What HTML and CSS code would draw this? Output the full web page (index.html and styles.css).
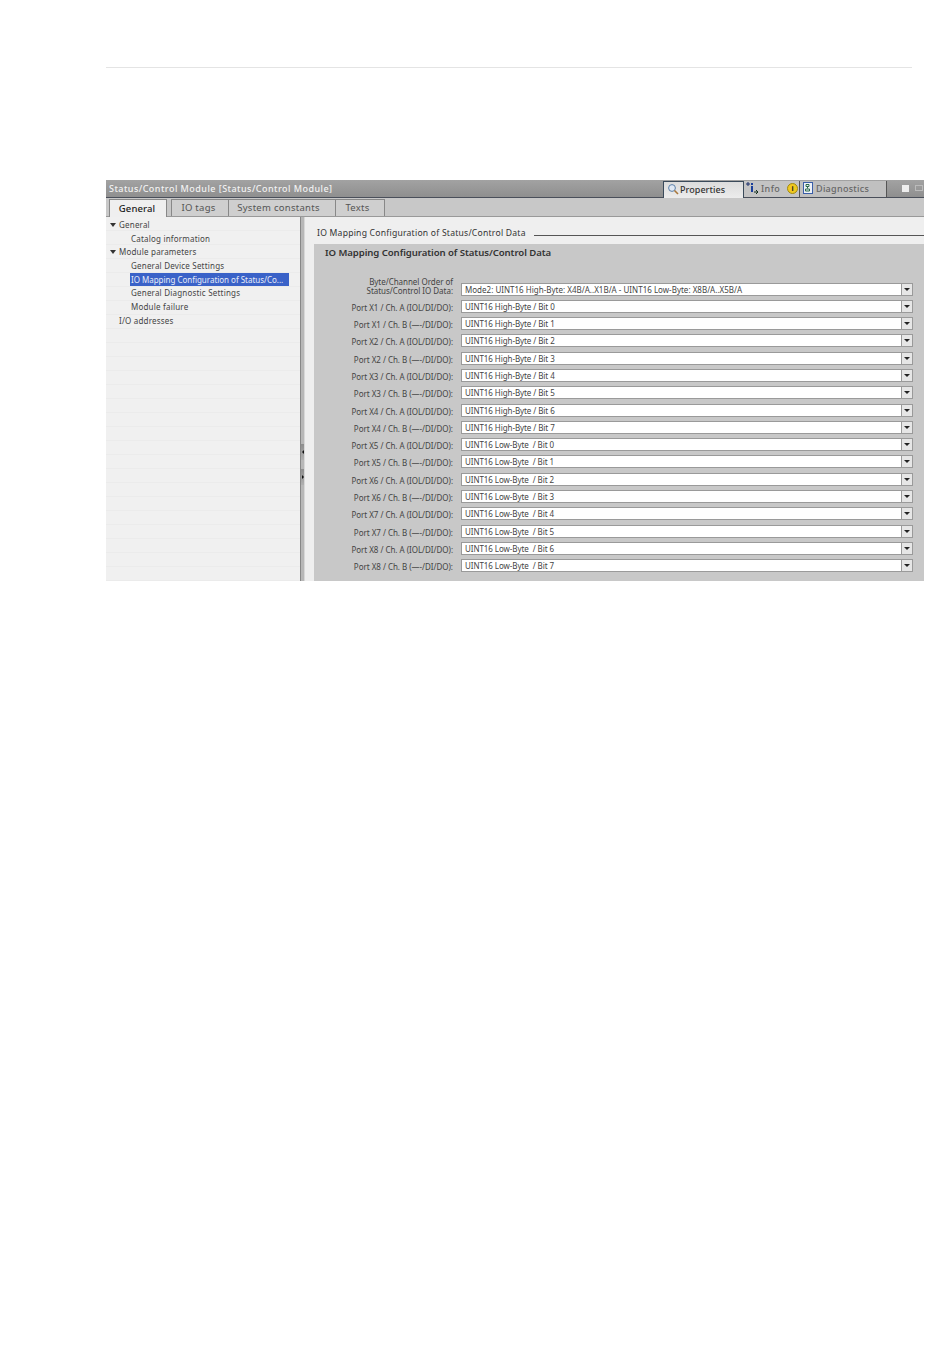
FILE: index.html
```html
<!DOCTYPE html>
<html lang="en">
<head>
<meta charset="utf-8">
<title>Status/Control Module</title>
<link rel="stylesheet" href="styles.css">
</head>
<body>
<div class="rule"></div>
<div class="panel">
  <div class="titlebar">
    <span class="title">Status/Control Module [Status/Control Module]</span>
    <div class="viewtabs">
      <div class="vtab active">
        <svg class="vicon" viewBox="0 0 12 12"><circle cx="5" cy="5" r="3.4" fill="#dfe8f4" stroke="#5a7fa8"/><path d="M7.500 7.500L11 11" stroke="#a8763a" stroke-width="1.6"/></svg>
        <span>Properties</span>
      </div>
      <div class="vtab info">
        <svg class="vicon" viewBox="0 0 14 13"><path d="M3 0v4M1 2h4" stroke="#1b2f6b" stroke-width="1"/><rect x="6" y="1" width="2" height="2" fill="#1b3f9b"/><rect x="6" y="4" width="2" height="6" fill="#1b3f9b"/><path d="M9 10h4M11 8l2 2-2 2" stroke="#16301f" fill="none"/></svg>
        <span>Info</span>
        <span class="badge">i</span>
      </div>
      <div class="vtab diag">
        <svg class="vicon" viewBox="0 0 12 12"><rect x="1.500" y="0.500" width="9" height="11" fill="#eef2f8" stroke="#3a5ea8"/><path d="M4 2.500h3v2H4zM5.500 4.500v2M3.500 7h4v2h-4z" stroke="#2b6a4a" fill="none"/></svg>
        <span>Diagnostics</span>
      </div>
    </div>
    <div class="winbtns"><span class="wb-restore"></span><span class="wb-min"></span></div>
  </div>
  <div class="tabs">
    <div class="tab current">General</div>
    <div class="tab w-io">IO tags</div>
    <div class="tab w-sys">System constants</div>
    <div class="tab w-txt">Texts</div>
  </div>
  <div class="body">
    <div class="tree">
      <div class="node"><span class="caret"></span>General</div>
      <div class="node sub">Catalog information</div>
      <div class="node"><span class="caret"></span>Module parameters</div>
      <div class="node sub">General Device Settings</div>
      <div class="node sub"><span class="sel">IO Mapping Configuration of Status/Co...</span></div>
      <div class="node sub">General Diagnostic Settings</div>
      <div class="node sub">Module failure</div>
      <div class="node leaf">I/O addresses</div>
    </div>
    <div class="splitter">
      <div class="grip"><span class="arr-l"></span></div>
      <div class="grip"><span class="arr-r"></span></div>
    </div>
    <div class="content">
      <div class="sechead"><span>IO Mapping Configuration of Status/Control Data</span><i class="secline"></i></div>
      <div class="group">
        <div class="grouptitle">IO Mapping Configuration of Status/Control Data</div>
        <div class="form">
          <label class="lab two">Byte/Channel Order of<br>Status/Control IO Data:</label>
          <div class="sel-box mode"><span>Mode2: UINT16 High-Byte: X4B/A..X1B/A - UINT16 Low-Byte: X8B/A..X5B/A</span><b class="drop"></b></div>
          <label class="lab">Port X1 / Ch. A (IOL/DI/DO):</label><div class="sel-box"><span>UINT16 High-Byte / Bit 0</span><b class="drop"></b></div>
          <label class="lab">Port X1 / Ch. B (—-/DI/DO):</label><div class="sel-box"><span>UINT16 High-Byte / Bit 1</span><b class="drop"></b></div>
          <label class="lab">Port X2 / Ch. A (IOL/DI/DO):</label><div class="sel-box"><span>UINT16 High-Byte / Bit 2</span><b class="drop"></b></div>
          <label class="lab">Port X2 / Ch. B (—-/DI/DO):</label><div class="sel-box"><span>UINT16 High-Byte / Bit 3</span><b class="drop"></b></div>
          <label class="lab">Port X3 / Ch. A (IOL/DI/DO):</label><div class="sel-box"><span>UINT16 High-Byte / Bit 4</span><b class="drop"></b></div>
          <label class="lab">Port X3 / Ch. B (—-/DI/DO):</label><div class="sel-box"><span>UINT16 High-Byte / Bit 5</span><b class="drop"></b></div>
          <label class="lab">Port X4 / Ch. A (IOL/DI/DO):</label><div class="sel-box"><span>UINT16 High-Byte / Bit 6</span><b class="drop"></b></div>
          <label class="lab">Port X4 / Ch. B (—-/DI/DO):</label><div class="sel-box"><span>UINT16 High-Byte / Bit 7</span><b class="drop"></b></div>
          <label class="lab">Port X5 / Ch. A (IOL/DI/DO):</label><div class="sel-box"><span>UINT16 Low-Byte&nbsp; / Bit 0</span><b class="drop"></b></div>
          <label class="lab">Port X5 / Ch. B (—-/DI/DO):</label><div class="sel-box"><span>UINT16 Low-Byte&nbsp; / Bit 1</span><b class="drop"></b></div>
          <label class="lab">Port X6 / Ch. A (IOL/DI/DO):</label><div class="sel-box"><span>UINT16 Low-Byte&nbsp; / Bit 2</span><b class="drop"></b></div>
          <label class="lab">Port X6 / Ch. B (—-/DI/DO):</label><div class="sel-box"><span>UINT16 Low-Byte&nbsp; / Bit 3</span><b class="drop"></b></div>
          <label class="lab">Port X7 / Ch. A (IOL/DI/DO):</label><div class="sel-box"><span>UINT16 Low-Byte&nbsp; / Bit 4</span><b class="drop"></b></div>
          <label class="lab">Port X7 / Ch. B (—-/DI/DO):</label><div class="sel-box"><span>UINT16 Low-Byte&nbsp; / Bit 5</span><b class="drop"></b></div>
          <label class="lab">Port X8 / Ch. A (IOL/DI/DO):</label><div class="sel-box"><span>UINT16 Low-Byte&nbsp; / Bit 6</span><b class="drop"></b></div>
          <label class="lab">Port X8 / Ch. B (—-/DI/DO):</label><div class="sel-box"><span>UINT16 Low-Byte&nbsp; / Bit 7</span><b class="drop"></b></div>
        </div>
      </div>
    </div>
  </div>
</div>
</body>
</html>
```
FILE: styles.css
```css
html, body { margin: 0; padding: 0; background: #fff; }
body {
  width: 950px;
  height: 1369px;
  overflow: hidden;
  padding: 67px 0 0 106px;
  box-sizing: border-box;
  font-family: "Noto Sans", "Open Sans", sans-serif;
  font-size: 8px;
  color: #333;
}
.rule { width: 806px; height: 1px; background: #e4e4e4; }
.panel {
  width: 818px;
  height: 401px;
  margin-top: 112px;
  display: flex;
  flex-direction: column;
  background: #efefef;
}
.titlebar {
  height: 18px;
  box-sizing: border-box;
  background: linear-gradient(#a2a2a2, #8f8f8f);
  border-bottom: 1px solid #4a4f5a;
  display: flex;
  align-items: flex-end;
  flex: none;
}
.title { align-self: center; margin-left: 3px; color: #f2f2f2; font-size: 9px; font-weight: 500; letter-spacing: .46px; flex: 1; white-space: nowrap; }
.viewtabs { display: flex; height: 17px; margin-right: 15px; margin-bottom: -1px; }
.vtab {
  display: flex; align-items: center; gap: 2px;
  background: #c8c8c8; color: #666; font-size: 9px; font-weight: 500;
  letter-spacing: .3px;
  border-right: 1px solid #555;
  box-sizing: border-box;
  height: 17px;
  padding-bottom: 2px;
}
.vtab.active { width: 81px; background: linear-gradient(#dcdcdc, #ececec); color: #333; padding-left: 3px; gap: 1px; letter-spacing: .05px; border-top: 1px solid #3a4a5a; border-left: 1px solid #3a4a5a; border-right: 1px solid #3a4a5a; }
.vtab.info { width: 56px; padding-left: 1px; background: #c4c4c4; border-bottom: 1px solid #4a4f5a; gap: 2px; letter-spacing: .4px; }
.vtab.diag { width: 87px; padding-left: 2px; background: #c0c0c0; border-bottom: 1px solid #4a4f5a; }
.vicon { width: 12px; height: 12px; flex: none; }
.vtab.info .vicon { width: 14px; height: 13px; }
.badge {
  width: 9px; height: 9px; border-radius: 50%;
  background: #f0c820; border: 1px solid #a08a10;
  color: #222; font-size: 7px; font-weight: 700; line-height: 9px; text-align: center;
  margin-left: 5px;
}
.winbtns { display: flex; gap: 6px; align-self: center; width: 22px; }
.wb-restore { width: 7px; height: 7px; background: #eee; }
.wb-min { width: 8px; height: 6px; border: 1px solid #bbb; box-sizing: border-box; }
.tabs {
  height: 19px;
  flex: none;
  box-sizing: border-box;
  background: #c8c8c8;
  border-bottom: 1px solid #999;
  display: flex;
  align-items: flex-end;
  padding-left: 4px;
}
.tab {
  height: 17px;
  box-sizing: border-box;
  border: 1px solid #888;
  border-bottom: 0;
  background: #cfcfcf;
  color: #555;
  font-size: 9.5px;
  letter-spacing: .28px;
  text-align: center;
  line-height: 16px;
  margin-left: -1px;
}
.tab.current { width: 58px; height: 18px; padding-right: 2px; background: #efefef; color: #222; font-weight: 500; letter-spacing: .1px; margin-bottom: -1px; line-height: 17px; }
.w-io { width: 58px; margin-left: 4px; padding-right: 3px; }
.w-sys { width: 108px; padding-right: 7px; }
.w-txt { width: 50px; padding-right: 5px; }
.body { flex: 1; display: flex; min-height: 0; }
.tree {
  width: 194px;
  flex: none;
  box-sizing: border-box;
  padding-top: 1px;
  background: repeating-linear-gradient(#f0f0f0 0, #f0f0f0 13px, #ebebeb 13px, #ebebeb 14px);
}
.node { height: 13.7px; line-height: 13.7px; padding-left: 13px; color: #444; letter-spacing: .2px; white-space: nowrap; position: relative; }
.node.sub { padding-left: 25px; }
.caret {
  position: absolute; left: 4px; top: 5px;
  width: 0; height: 0;
  border-left: 3px solid transparent; border-right: 3px solid transparent; border-top: 4px solid #333;
}
.sel { background: #3a62c8; color: #e8ecf8; display: inline-block; line-height: 13px; padding: 0 1px; width: 159px; box-sizing: border-box; letter-spacing: -.02px; margin-left: -1px; }
.splitter {
  width: 5px;
  flex: none;
  background: #b8b8b8;
  border-left: 1px solid #888;
  border-right: 1px solid #d8d8d8;
  display: flex;
  flex-direction: column;
  padding-top: 227px;
  gap: 9px;
  box-sizing: border-box;
}
.grip { height: 16px; background: linear-gradient(#8e8e8e, #b0b0b0); display: flex; align-items: center; justify-content: center; }
.arr-l { width: 0; height: 0; border-top: 2px solid transparent; border-bottom: 2px solid transparent; border-right: 2px solid #111; }
.arr-r { width: 0; height: 0; border-top: 2px solid transparent; border-bottom: 2px solid transparent; border-left: 2px solid #111; }
.content { flex: 1; min-width: 0; display: flex; flex-direction: column; background: #efefef; }
.sechead { height: 27px; box-sizing: border-box; padding-top: 5px; flex: none; display: flex; align-items: center; padding-left: 12px; gap: 8px; font-size: 8.6px; letter-spacing: .23px; color: #333; }
.secline { flex: 1; height: 1px; background: #555; margin-top: 4px; }
.group { flex: 1; margin-left: 9px; background: #c8c8c8; min-height: 0; }
.grouptitle { padding: 2px 0 0 11px; font-size: 9.6px; font-weight: 600; letter-spacing: -.07px; color: #333; height: 20px; box-sizing: border-box; }
.form {
  display: grid;
  grid-template-columns: 141px 452px;
  column-gap: 6px;
  row-gap: 4.3px;
  padding-top: 12.5px;
  align-items: end;
}
.lab { text-align: right; line-height: 9px; color: #444; letter-spacing: -.03px; padding: 0 2px 1px 0; white-space: nowrap; }
.sel-box {
  height: 13px;
  box-sizing: border-box;
  background: #fff;
  border: 1px solid #9a9a9a;
  border-right: 0;
  display: flex;
  align-items: center;
  justify-content: space-between;
  padding-left: 3px;
  color: #444;
  letter-spacing: -.07px;
  white-space: nowrap;
}
.sel-box.mode { letter-spacing: .01px; }
.drop {
  width: 12px; height: 13px; flex: none; box-sizing: border-box;
  border: 1px solid #9a9a9a;
  background: #e6e6e6;
  display: flex; align-items: center; justify-content: center;
}
.drop::after {
  content: "";
  border-left: 3px solid transparent; border-right: 3px solid transparent; border-top: 3px solid #222;
}
```
